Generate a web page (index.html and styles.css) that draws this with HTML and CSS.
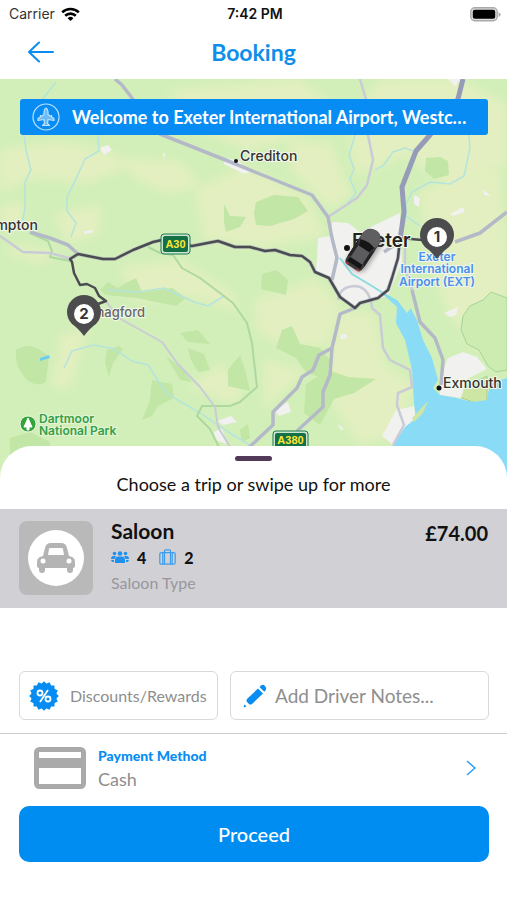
FILE: index.html
```html
<!DOCTYPE html>
<html lang="en">
<head>
	<meta charset="utf-8">
	<meta name="viewport" content="width=device-width, initial-scale=1">
	<title>Booking</title>
	<link rel="stylesheet" href="styles.css">
</head>
<body>
	<div class="status-bar">
		<div class="carrier">
			<span>Carrier</span>
			<svg width="19" height="15" viewBox="0 0 19 15" fill="none" stroke="#000" stroke-width="2.6">
				<path d="M1.2 5.4a12 12 0 0 1 16.6 0"/>
				<path d="M4.2 8.8a7.6 7.6 0 0 1 10.6 0"/>
				<path d="M9.5 14 6.6 11.2a4.2 4.2 0 0 1 5.8 0z" fill="#000" stroke="none"/>
			</svg>
		</div>
		<div class="time">7:42 PM</div>
		<div class="battery">
			<svg width="31" height="15" viewBox="0 0 31 15">
				<rect x=".8" y=".8" width="26.4" height="13" rx="4" fill="#ddd" stroke="#aaa" stroke-width="1.4"/>
				<rect x="2.8" y="2.8" width="22.4" height="9" rx="2" fill="#000"/>
				<path d="M28.6 5v5q2-1 2-2.5T28.6 5z" fill="#aaa"/>
			</svg>
		</div>
	</div>

	<header class="nav-bar">
		<button class="back" type="button" aria-label="Back">
			<svg width="26" height="22" viewBox="0 0 26 22" fill="none" stroke="#0a8cf0" stroke-width="2" stroke-linecap="round" stroke-linejoin="round">
				<path d="M25 11H1M11 1.500 1 11l10 9.500"/>
			</svg>
		</button>
		<h1>Booking</h1>
	</header>

	<main class="map-area">
		<svg class="map" viewBox="0 79 507 401" preserveAspectRatio="xMidYMin slice">
			<defs>
				<filter id="soft"><feGaussianBlur stdDeviation="4"/></filter>
				<filter id="shade" x="-30%" y="-30%" width="160%" height="160%"><feGaussianBlur stdDeviation="2"/></filter>
			</defs>
			<rect y="79" width="507" height="401" fill="#d3efb9"/>

			<!-- farmland -->
			<g fill="#e3efc0" filter="url(#soft)">
				<path d="M0 150l60-8 50 10 20 14-40 16-60-4-30 14z"/>
				<path d="M120 158l60 4 20 22-30 10-36-16z"/>
				<path d="M195 190l50-24 60 30 20 40-60 10-60-6z"/>
				<path d="M55 215l45-10-2 30-30 8z"/>
				<path d="M0 205l26-2-6 24H0z"/>
				<path d="M10 245l50 6-20 12-30-8z"/>
				<path d="M170 90l130-10 50 40-100 30-50-20z"/>
				<path d="M380 80l80-1 47 26v60l-60 20-40-30-50 20-10-50z"/>
				<path d="M420 190l80-20 7 120-30 60-30-40-20-60z"/>
				<path d="M290 140l40 4 20 50-20 14-40-40z"/>
				<path d="M340 310l34 4 10 50 28 20-12 50-40 10-34-50 6-50z"/>
				<path d="M255 300l60-20 24 24-12 40-40 6-30-20z"/>
				<path d="M265 360l40 10-40 40z"/>
				<path d="M190 385l30-20 24 20-10 20z"/>
				<path d="M62 335l24-5-16 58-18-2z"/>
				<path d="M120 268l60-8 50 32 10 20-50-16-50 6z"/>
			</g>

			<!-- woodland -->
			<g fill="#c1e6a5">
				<path d="M16 350q12-8 24 0l9 6-3 26q-10 6-20-3-12-14-10-29z"/>
				<path d="M256 202l18-7 24 2 10 14-14 8-14 4-10 3-14-1-2-12z"/>
				<path d="M224 204l6 12 16 1-6 10-14 5-2-10z"/>
				<path d="M426 158l14-1 8 4 1 14-15 4-9-8z"/>
				<path d="M262 274l14-4 12 10-2 15-25-6z"/>
				<path d="M107 350l12-4 4 3-10 14-4 14-4-14z"/>
				<path d="M152 380l20 4 2 14-16 8-6 10-10 4 8-20z"/>
				<path d="M180 333l18-3 12 14-22-2zM188 348l16 6 6 16-12 2-8-14z"/>
				<path d="M228 370l12-15 6 18 4 18-22-5z"/>
				<path d="M166 356l16 12 10 14-12-2z"/>
				<path d="M100 290l8-8 10 6 10-6 8-4 6 14 30-4 14 10-10 8-40-8-30-3z"/>
				<path d="M276 348l6-18 10-4 8 18 20 4 10 12-4 20-20-8-10-14z"/>
				<path d="M306 384l22-14 20 7 28 2-22 14-20 6-14 26-16-12z"/>
				<path d="M10 438l20-6 20 10v20H10z"/>
				<path d="M240 430l8-6 2 14-8 4z"/>
			</g>
			<path d="M507 298l-16-6-8 8-13 6-7 10-2 14 6 14 12 6 9 16 8 6 11-2z" fill="#cdecb1" stroke="#a7d498" stroke-width="1"/>
			<path d="M455 395l18-12 14-7v26l-12 1z" fill="#cde6a4" stroke="#a9cf8c"/>

			<!-- towns -->
			<g fill="#f1f1ef">
				<path d="M318 238l14-2v-14l16 1 12 9 40-19 2 49-14 34-24 6-9 5-17-14-8-16-14-6 1-14z"/>
				<path d="M440 378l8-20 15-6 14 5 10 12-20 10-6 19-21-3z"/>
				<path d="M396 410l18-4 2 14-22 26-12-10z"/>
				<path d="M100 148l8-3 4 5-8 5zM163 153h2l-1 8zM84 231l10-1-3 3-7 1z"/>
				<path d="M414 195l6 3-1 9-5-3zM450 214l13-7 2 5-12 4zM484 190l7 6-7-1z"/>
				<path d="M217 421l14-5 6 6-14 3zM214 432l8-4 5 16-12-4z"/>
				<path d="M274 410l14-8 3 10-12 4zM340 335l6-1 2 4-7 1z"/>
				<path d="M444 313l14-6-2 8-6 2zM337 423l7 6-3 1z"/>
				<path d="M224 158l14 2 12 12-6 2-20-10zM448 79h13l-6 7z"/>
			</g>

			<!-- water -->
			<path d="M378 290l19 10 10 13 4-5 2 5 4 7 6 20 9 18 6 22-5 8 7 7 17 3 16 4 14-2 3-17 17-5v102H380l13-35 12-18 11-9-2-15-2-33-7-30-9-17 1-16z" fill="#8adcf6"/>
			<path d="M412 418l16-17-5 12-9 9z" fill="#cde6a4"/>
			<path d="M40 358l9-3 1 3-10 3z" fill="#6fcdf2"/>
			<g fill="none" stroke="#b4e4dc" stroke-width="1.500">
				<path d="M56 82l-14 18-20 18 4 32 5 20-6 12v26l-4 20"/>
				<path d="M98 135l1 16-14 8-10 22-8 16v14l9 12-5 14"/>
				<path d="M355 135l-6 20 5 14-4 10 6 14-8 10"/>
				<path d="M375 170l8-4 10-14 12-4 8 3M482 100l-14 24 2 24-6 28-14 8-20-2-18 10-6 12v12l14 10"/>
				<path d="M340 258l12 16 20 12 22 14" stroke="#8adcdf" stroke-width="2"/>
				<path d="M64 368l8-17 22-6 20 4 18 12 16 4 18 28 34 20 30 20 20 12"/>
				<path d="M108 290l30 2 26-4 30 14 14 4 16-10"/>
			</g>

			<!-- park boundary -->
			<path d="M30 233l18 8 4 10-2 6 20 4M148 247l12 6 13 2 9 13 18 10 20 15 13 10 14 20 5 20 3 27 2 17-17 15-10 4h-28l-5 10 13 13 10 20" fill="none" stroke="#add8a0" stroke-width="2" stroke-linejoin="round"/>

			<!-- roads -->
			<g fill="none" stroke="#c9cbd6" stroke-width="2.500" stroke-linejoin="round">
				<path d="M0 236l23 16 27 1 22 6"/>
				<path d="M360 79l7 24 1 32 5 25-6 25-10 13-29 19"/>
				<path d="M106 301l11 16 45 25 15 21 23 24 15 20 3 20 12 20" stroke-width="2"/>
				<path d="M338 300q2-14 18-14 14 2 16 22l8 7 3 33 7 12 20 10 2 17-14 6-1 12 7 20-11 20M405 242v26l8 25"/>
			</g>
			<g fill="none" stroke="#b4b9c8" stroke-width="3.500" stroke-linejoin="round">
				<path d="M115 79l7 6 13 17 25 32 63 25 37 15 52 21 16 22 4 21 5 20-5 22"/>
				<path d="M30 232l20 6 18 7 10 9"/>
				<path d="M455 242l25-9 27-21M384 252l12-8"/>
				<path d="M355 308l-15 6-8 34-2 27-7 17v15l-25 23-20 28M332 348l-13 7-6 15-11 7-5 11-24 24v13l-30 28"/>
				<path d="M412 290l8 32 15 16 8 22-2 25"/>
			</g>
			<path d="M463 79l-5 20-28 36-14 16-14 36 2 25-4 28" fill="none" stroke="#969cb8" stroke-width="5" stroke-linejoin="round"/>

			<!-- route -->
			<path d="M70 259l8-5 25 5h12l18-9 20-8 9-2 30 6 26-5 17 6h15l15 4 10-1 15 5 12 1 8 6 5 10 14 6 11 19 15 11 5-5 18-5 10-8 4-12 6-20 2-20" fill="none" stroke="#aeb0bf" stroke-width="4" stroke-linejoin="round" opacity=".6"/>
			<path d="M84 316l14-12 8-3-7-5-4-8-8-4-7 1-6-12-2-11-2-3 8-5 25 5h12l18-9 20-8 9-2 30 6 26-5 17 6h15l15 4 10-1 15 5 12 1 8 6 5 10 14 6 11 19 15 11 5-5 18-5 10-8 4-12 6-20 2-20 22 2" fill="none" stroke="#4b4c51" stroke-width="2.500" stroke-linejoin="round"/>

			<!-- road shields -->
			<g class="shield">
				<rect x="161" y="234" width="29" height="20" rx="3" fill="#cfe5d4" stroke="#1d7a4c"/>
				<rect x="163" y="236" width="25" height="16" rx="2" fill="#137146"/>
				<text x="175.500" y="248">A30</text>
				<rect x="273" y="431" width="35" height="20" rx="3" fill="#cfe5d4" stroke="#1d7a4c"/>
				<rect x="275" y="433" width="31" height="16" rx="2" fill="#137146"/>
				<text x="290.500" y="444">A380</text>
			</g>

			<!-- places -->
			<g class="place">
				<circle cx="236" cy="161" r="2"/>
				<text x="240" y="161">Crediton</text>
				<text x="38" y="230" text-anchor="end">mpton</text>
				<circle cx="439" cy="388" r="2.500"/>
				<text x="443" y="388">Exmouth</text>
				<circle cx="347" cy="248" r="3"/>
				<text class="city" x="352" y="247">Exeter</text>
				<text class="village" x="145" y="317">Chagford</text>
			</g>
			<g class="airport">
				<text x="437" y="261">Exeter</text>
				<text x="437" y="273">International</text>
				<text x="437" y="286">Airport (EXT)</text>
			</g>
			<circle cx="28" cy="424" r="8" fill="#35a33c" stroke="#e9f7df"/>
			<path d="M28 418l4 9h-3v3h-2v-3h-3z" fill="#fff" stroke="#fff" stroke-linejoin="round"/>
			<g class="park">
				<text x="39" y="423">Dartmoor</text>
				<text x="39" y="435">National Park</text>
			</g>

			<!-- car -->
			<g transform="translate(364 249) rotate(33)">
				<rect x="-9" y="-19" width="22" height="42" rx="8" fill="#555" opacity=".45" filter="url(#shade)"/>
				<path d="M-10-12q1-10 10-10t10 10v28q0 6-4 6H-6q-4 0-4-6z" fill="#3a3a3c"/>
				<path d="M-10-10q1-12 10-12t10 12l-1 3H-9z" fill="#5f5f61"/>
				<path d="M-8-6q8-4 16 0l-2 6H-6zM-7 14H7l1 5H-8z" fill="#151515"/>
				<path d="M-7 0H7v14H-7z" fill="#5c5c5e"/>
				<path d="M-10-5l3 5v12l-3 3zM10-5 7 0v12l3 3z" fill="#242425"/>
				<path d="M-8 21h3M5 21h3" stroke="#c33" stroke-width="1.500"/>
			</g>

			<!-- pins -->
			<g class="pin">
				<path d="M437 259q-6-8-12-12a17 17 0 1 1 24 0q-6 4-12 12z"/>
				<circle cx="437" cy="237" r="10"/>
				<text x="437" y="242">1</text>
				<path d="M84 336q-6-8-12-12a17 17 0 1 1 24 0q-6 4-12 12z"/>
				<circle cx="84" cy="314" r="10"/>
				<text x="84" y="319">2</text>
			</g>
		</svg>

		<div class="banner">
			<svg width="28" height="28" viewBox="0 0 28 28" fill="none" stroke="#bfe2ff" stroke-width="1.200" stroke-linejoin="round">
				<circle cx="14" cy="14" r="13"/>
				<path d="M14 5q-2 1-2 4v2.500L6 15.500v2l6-1 .5 4-2 2h7l-2-2 .5-4 6 1v-2l-6-4V9q0-3-2-4z" fill="#6bbcf8"/>
				<path d="M8.500 14v-2M19.500 14v-2"/>
			</svg>
			<p>Welcome to Exeter International Airport, Westcott Lane</p>
		</div>
	</main>

	<section class="sheet">
		<div class="handle"></div>
		<h2>Choose a trip or swipe up for more</h2>

		<button class="vehicle" type="button">
			<span class="thumb">
				<svg width="56" height="56" viewBox="0 0 56 56">
					<circle cx="28" cy="28" r="28" fill="#fff"/>
					<path d="M15 26l2-8q1-5 6-5h10q5 0 6 5l2 8q6 1 6 6v4q0 2-2 2v2q0 3-3 3t-3-3v-2H17v2q0 3-3 3t-3-3v-2q-2 0-2-2v-4q0-5 6-6z" fill="#b4b4b5"/>
					<path d="M20 25l1-6q0-1 2-1h10q2 0 2 1l1 6z" fill="#fff"/>
					<circle cx="15" cy="31" r="2.500" fill="#fff"/>
					<circle cx="41" cy="31" r="2.500" fill="#fff"/>
				</svg>
			</span>
			<span class="info">
				<span class="name">Saloon</span>
				<span class="capacity">
					<svg width="18" height="12" viewBox="0 0 18 12" fill="#1e90ee">
						<circle cx="3.500" cy="2.500" r="1.800"/><circle cx="9" cy="2.500" r="2.200"/><circle cx="14.500" cy="2.500" r="1.800"/>
						<path d="M0 8q0-3 2.500-3H5q-1.500 2-1.500 3zM18 8q0-3-2.500-3H13q1.500 2 1.500 3zM4 12V9q0-3.500 3-3.500h4q3 0 3 3.500v3z"/>
						<path d="M0 9h3v2H1zM15 9h3l-1 2h-2z"/>
					</svg>
					<b>4</b>
					<svg class="bag" width="17" height="16" viewBox="0 0 17 16" fill="none" stroke="#3b9df0" stroke-width="1.200">
						<rect x=".8" y="3.600" width="15.400" height="11.600" rx="1.500"/>
						<path d="M3.800 15V3.600M13.200 15V3.600M5.500 15V1.800q0-1 1-1h4q1 0 1 1V15"/>
					</svg>
					<b>2</b>
				</span>
				<span class="type">Saloon Type</span>
			</span>
			<span class="price">£74.00</span>
		</button>

		<div class="extras">
			<button class="box discounts" type="button">
				<svg width="30" height="30" viewBox="0 0 30 30">
					<g fill="#068cf2">
						<rect x="4.500" y="4.500" width="21" height="21"/>
						<rect x="4.500" y="4.500" width="21" height="21" transform="rotate(22.500 15 15)"/>
						<rect x="4.500" y="4.500" width="21" height="21" transform="rotate(45 15 15)"/>
						<rect x="4.500" y="4.500" width="21" height="21" transform="rotate(67.500 15 15)"/>
					</g>
					<g fill="none" stroke="#fff" stroke-width="1.800">
						<circle cx="11" cy="12" r="2.500"/>
						<circle cx="19" cy="18" r="2.500"/>
						<path d="M19 9l-8 12"/>
					</g>
				</svg>
				<span>Discounts/Rewards</span>
			</button>
			<label class="box notes">
				<svg width="24" height="24" viewBox="0 0 24 24" fill="#068cf2">
					<path d="M4 15 15 4.500l5 5L9 20q-1.500 1-3 0l-2-2q-1-1.500 0-3z"/>
					<path d="M16.500 3l1.500-1.500q2-1.500 4 .5t.8 4L21.300 7.800z"/>
					<path d="M1.500 20.500l2 2-3 1z"/>
				</svg>
				<input type="text" placeholder="Add Driver Notes..." aria-label="Driver notes">
			</label>
		</div>

		<button class="payment" type="button">
			<svg width="52" height="42" viewBox="0 0 52 42">
				<rect x="2.500" y="2.500" width="47" height="37" rx="3" fill="#fff" stroke="#aaa" stroke-width="5"/>
				<path d="M4 11h44v10H4z" fill="#aaa"/>
			</svg>
			<span class="method">
				<span class="label">Payment Method</span>
				<span class="value">Cash</span>
			</span>
			<svg class="chevron" width="10" height="16" viewBox="0 0 10 16" fill="none" stroke="#2a9af3" stroke-width="1.500">
				<path d="M1 1l8 7-8 7"/>
			</svg>
		</button>

		<button class="proceed" type="button">Proceed</button>
	</section>
</body>
</html>
```
FILE: styles.css
```css
*{box-sizing:border-box; margin:0; padding:0;}
body{display:flex; flex-direction:column; min-height:100vh; background:#fff; color:#111; font-family:Lato, "Open Sans", sans-serif;}
button,input{border:0; background:none; color:inherit; font-family:inherit; text-align:left;}
button{cursor:pointer;}
svg{flex:none; display:block;}

/* top bars */
.status-bar{display:grid; grid-template-columns:1fr auto 1fr; align-items:center; height:28px; padding:0 6px 0 9px; font:14px/20px Inter, sans-serif;}
.carrier{display:flex; align-items:center; gap:6px; color:#333;}
.time{font-weight:600;}
.battery{justify-self:end;}
.nav-bar{display:grid; grid-template-columns:1fr auto 1fr; align-items:center; height:51px; padding:0 28px 4px;}
.nav-bar h1{color:#0f8fea; font-size:23px; line-height:32px; font-weight:700;}

/* map */
.map-area{position:relative; flex:1 0 400px;}
.map{position:absolute; width:100%; height:100%; font-family:Inter, sans-serif;}
.banner{position:absolute; top:20px; left:20px; right:19px; display:flex; align-items:center; gap:12px; height:36px; padding:0 14px 0 12px; border-radius:3px; background:#068cf2; color:#fff;}
.banner p{overflow:hidden; white-space:nowrap; text-overflow:ellipsis; font-size:18px; line-height:24px; font-weight:700;}

.place text{fill:#333; stroke:#f4f8ea; stroke-width:2px; paint-order:stroke; font-size:14px; font-weight:500;}
.place circle{fill:#111;}
.place .city{fill:#222; font-size:19px; font-weight:600;}
.place .village{fill:#666; font-size:13px; text-anchor:end;}
.airport{fill:#4a90e8; stroke:#eef6f4; stroke-width:2px; paint-order:stroke; font-size:12px; font-weight:600; text-anchor:middle;}
.park{fill:#35a045; stroke:#e4f5d8; stroke-width:2px; paint-order:stroke; font-size:12px; font-weight:600;}
.shield text{fill:#ffe534; font-family:"Liberation Sans", sans-serif; font-size:11px; font-weight:700; text-anchor:middle;}
.pin path{fill:#4c4c4e;}
.pin circle{fill:#fff;}
.pin text{fill:#333; font-size:15px; font-weight:700; text-anchor:middle;}

/* bottom sheet */
.sheet{position:relative; display:flex; flex-direction:column; margin-top:-34px; padding:10px 0 38px; border-radius:32px 32px 0 0; background:#fff;}
.handle{align-self:center; width:37px; height:5px; border-radius:3px; background:#513b59;}
.sheet h2{padding:11px 0 13px; font-size:18px; line-height:24px; font-weight:400; text-align:center;}

.vehicle{display:flex; align-items:flex-start; gap:18px; padding:12px 19px 13px; background:#d1d0d5;}
.thumb{display:grid; place-items:center; width:74px; height:74px; border-radius:8px; background:#b9b9ba;}
.info{display:flex; flex-direction:column; flex:1;}
.name{font-size:21px; line-height:24px; font-weight:700;}
.name,.price{margin-top:-2px;}
.capacity{display:flex; align-items:center; gap:8px; height:28px;}
.capacity b{font-size:16px; font-weight:900;}
.capacity .bag{margin-left:5px;}
.type{color:#98979c; font-size:16px; line-height:24px;}
.price{padding-top:2px; font-size:20px; line-height:24px; font-weight:700;}

.extras{display:grid; grid-template-columns:minmax(0, 199fr) minmax(0, 259fr); gap:12px; padding:63px 18px 13px 19px;}
.box{display:flex; align-items:center; height:49px; border:1px solid #d9d9d9; border-radius:6px; color:#8e8e8e;}
.discounts{gap:11px; padding:0 6px 0 9px; font-size:16px;}
.notes{gap:8px; padding:0 12px;}
.notes input{flex:1; min-width:0; font-size:19px; outline:0;}
.notes input::placeholder{color:#8e8e8e; opacity:1;}

.payment{display:flex; align-items:center; gap:12px; height:73px; padding:0 31px 4px 34px; border-top:1px solid #ccc;}
.method{display:flex; flex-direction:column; flex:1;}
.label{color:#068cf2; font-size:14px; line-height:22px; font-weight:900;}
.value{color:#8e8e8e; font-size:18px; line-height:24px;}

.proceed{height:56px; margin:0 18px 0 19px; border-radius:10px; background:#008df2; color:#fff; font-size:20px; font-weight:500; text-align:center;}
```
